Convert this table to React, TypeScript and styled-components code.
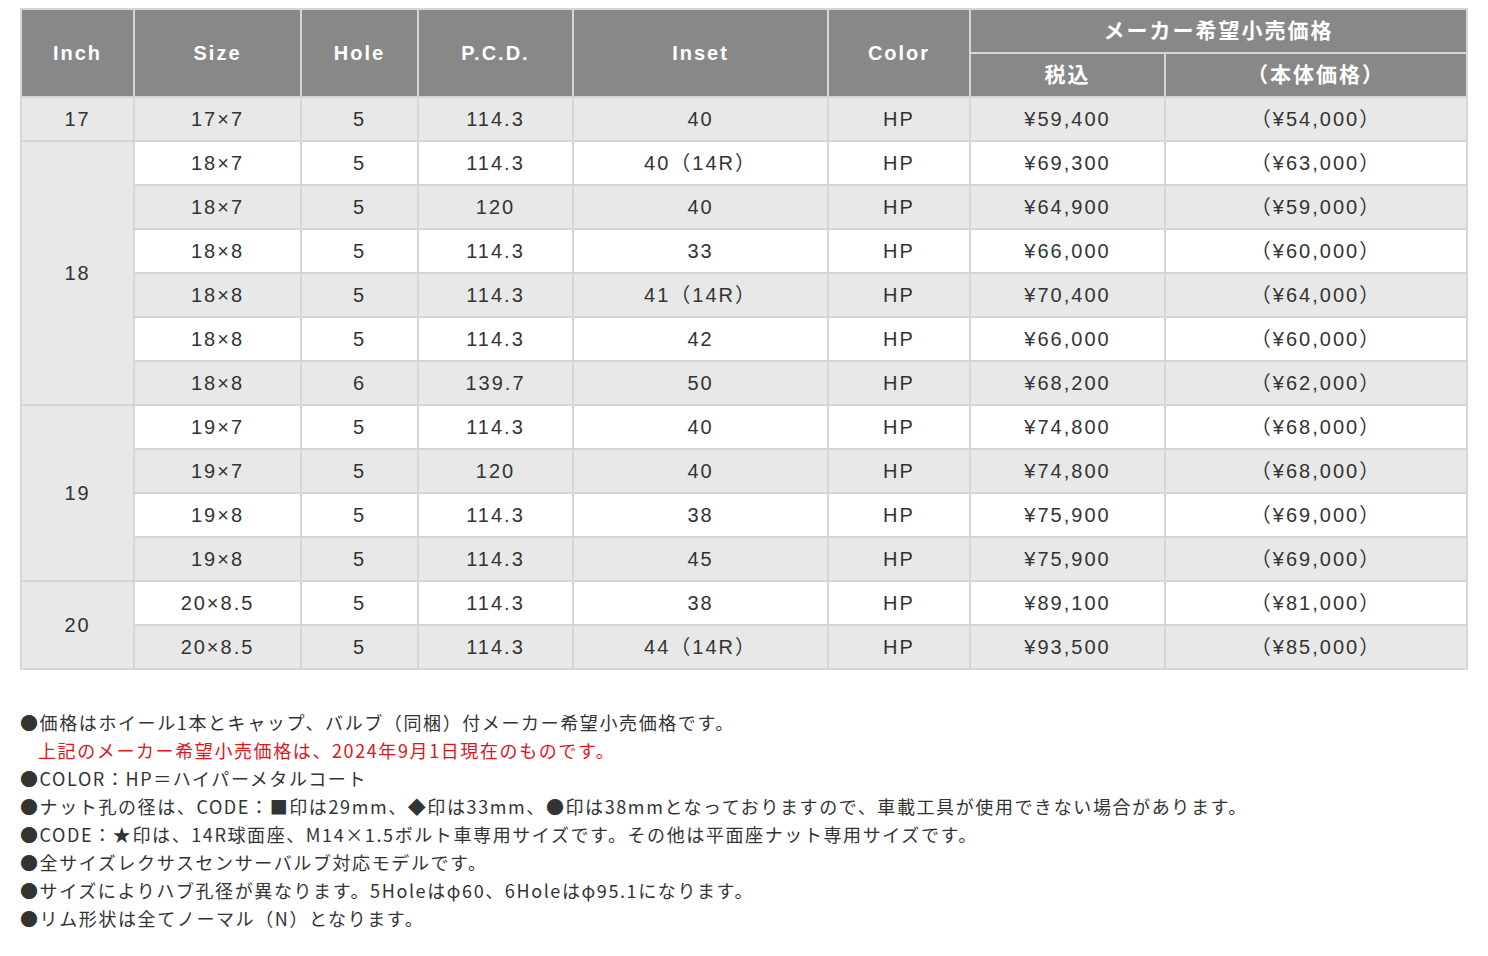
import React from "react";
import styled, {createGlobalStyle} from "styled-components";

const GlobalStyle = createGlobalStyle`
    body {
        margin: 0;
        background: #ffffff;
        font-family: "Liberation Sans", "Noto Sans CJK JP", sans-serif;
        color: #333333;
    }
`

const Page = styled.div`
    padding: 8px 21px 20px 20px;
`

const SpecTable = styled.table`
    width: 1446px;
    table-layout: fixed;
    border-collapse: collapse;
    border: 2px solid #d6d6d6;
`

const HeadCell = styled.th<{ $jp?: boolean }>`
    background: #888888;
    color: #ffffff;
    font-weight: bold;
    font-size: ${p => p.$jp ? "21px" : "20px"};
    letter-spacing: 2px;
    height: 42px;
    line-height: 20px;
    padding: 0;
    text-align: center;
    border: 2px solid #d6d6d6;
`

const Cell = styled.td<{ $shade: boolean }>`
    background: ${p => p.$shade ? "#e8e8e8" : "#ffffff"};
    font-size: 20px;
    line-height: 20px;
    letter-spacing: 2px;
    color: #333333;
    height: 42px;
    padding: 0;
    text-align: center;
    border: 2px solid #d6d6d6;
`

const Notes = styled.div`
    margin-top: 38px;
    font-family: "Noto Sans CJK JP", "Liberation Sans", sans-serif;
    font-size: 18px;
    line-height: 28px;
    letter-spacing: 1.6px;
    color: #333333;
`

const Note = styled.div<{ $red?: boolean }>`
    color: ${p => p.$red ? "#e3141b" : "#333333"};
    padding-left: ${p => p.$red ? "18px" : "0"};
`

type Row = [string, string, string, string, string, string, string]

const groups: { inch: string; rows: Row[] }[] = [
    {inch: "17", rows: [["17×7", "5", "114.3", "40", "HP", "¥59,400", "（¥54,000）"]]},
    {
        inch: "18", rows: [
            ["18×7", "5", "114.3", "40（14R）", "HP", "¥69,300", "（¥63,000）"],
            ["18×7", "5", "120", "40", "HP", "¥64,900", "（¥59,000）"],
            ["18×8", "5", "114.3", "33", "HP", "¥66,000", "（¥60,000）"],
            ["18×8", "5", "114.3", "41（14R）", "HP", "¥70,400", "（¥64,000）"],
            ["18×8", "5", "114.3", "42", "HP", "¥66,000", "（¥60,000）"],
            ["18×8", "6", "139.7", "50", "HP", "¥68,200", "（¥62,000）"],
        ]
    },
    {
        inch: "19", rows: [
            ["19×7", "5", "114.3", "40", "HP", "¥74,800", "（¥68,000）"],
            ["19×7", "5", "120", "40", "HP", "¥74,800", "（¥68,000）"],
            ["19×8", "5", "114.3", "38", "HP", "¥75,900", "（¥69,000）"],
            ["19×8", "5", "114.3", "45", "HP", "¥75,900", "（¥69,000）"],
        ]
    },
    {
        inch: "20", rows: [
            ["20×8.5", "5", "114.3", "38", "HP", "¥89,100", "（¥81,000）"],
            ["20×8.5", "5", "114.3", "44（14R）", "HP", "¥93,500", "（¥85,000）"],
        ]
    },
]

const widths = [113, 167, 117, 155, 255, 142, 195, 302]

function App() {
    let index = 0

    return (
        <Page>
            <GlobalStyle/>
            <SpecTable>
                <colgroup>
                    {widths.map((w, i) => <col key={i} style={{width: w}}/>)}
                </colgroup>
                <thead>
                <tr>
                    <HeadCell rowSpan={2}>Inch</HeadCell>
                    <HeadCell rowSpan={2}>Size</HeadCell>
                    <HeadCell rowSpan={2}>Hole</HeadCell>
                    <HeadCell rowSpan={2}>P.C.D.</HeadCell>
                    <HeadCell rowSpan={2}>Inset</HeadCell>
                    <HeadCell rowSpan={2}>Color</HeadCell>
                    <HeadCell $jp colSpan={2}>メーカー希望小売価格</HeadCell>
                </tr>
                <tr>
                    <HeadCell $jp>税込</HeadCell>
                    <HeadCell $jp>（本体価格）</HeadCell>
                </tr>
                </thead>
                <tbody>
                {groups.map(g => g.rows.map((r, i) => {
                    const shade = index % 2 === 0
                    index++
                    return (
                        <tr key={g.inch + i}>
                            {i === 0 && <Cell $shade rowSpan={g.rows.length}>{g.inch}</Cell>}
                            {r.map((v, j) => <Cell key={j} $shade={shade}>{v}</Cell>)}
                        </tr>
                    )
                }))}
                </tbody>
            </SpecTable>
            <Notes>
                <Note>●価格はホイール1本とキャップ、バルブ（同梱）付メーカー希望小売価格です。</Note>
                <Note $red>上記のメーカー希望小売価格は、2024年9月1日現在のものです。</Note>
                <Note>●COLOR：HP＝ハイパーメタルコート</Note>
                <Note>●ナット孔の径は、CODE：■印は29mm、◆印は33mm、●印は38mmとなっておりますので、車載工具が使用できない場合があります。</Note>
                <Note>●CODE：★印は、14R球面座、M14×1.5ボルト車専用サイズです。その他は平面座ナット専用サイズです。</Note>
                <Note>●全サイズレクサスセンサーバルブ対応モデルです。</Note>
                <Note>●サイズによりハブ孔径が異なります。5Holeはφ60、6Holeはφ95.1になります。</Note>
                <Note>●リム形状は全てノーマル（N）となります。</Note>
            </Notes>
        </Page>
    )
}

export default App
